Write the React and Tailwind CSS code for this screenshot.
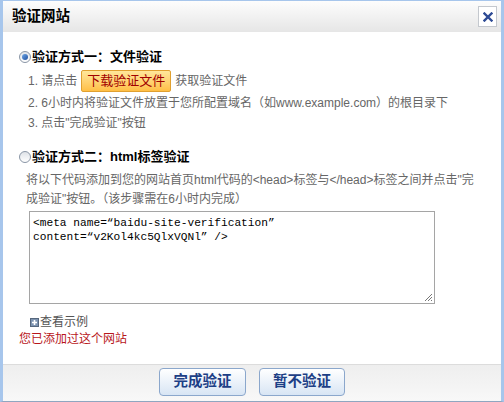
import React from "react";

const cjk = { fontFamily: '"Liberation Sans", "Noto Sans CJK SC", sans-serif' };
const mono = { fontFamily: '"Liberation Mono", "Noto Sans CJK SC", monospace' };

function Radio({ checked }) {
  return (
    <span className="relative inline-flex h-[12px] w-[12px] shrink-0 items-center justify-center rounded-full border border-[#8a96a6] bg-gradient-to-b from-[#dfe3e8] to-[#ffffff]">
      {checked && (
        <span className="h-[6px] w-[6px] rounded-full bg-gradient-to-br from-[#6fa8e8] to-[#1f4f9e]" />
      )}
    </span>
  );
}

export default function App() {
  return (
    <div
      className="flex h-[402px] w-[504px] flex-col border-x-[3px] border-t border-b border-x-[#a7c6ec] border-t-[#a7c6ec] border-b-[#8fa6c0] bg-white"
      style={cjk}
    >
      {/* Header */}
      <div className="flex h-[31px] shrink-0 items-center justify-between bg-gradient-to-b from-[#fdfdfd] to-[#e6e6e6] pl-[9px] pr-[4px]">
        <span className="text-[14.5px] font-bold leading-none text-black">验证网站</span>
        <span className="flex h-[21px] w-[19px] items-center justify-center border border-[#c4c8ce] bg-white">
          <svg width="10" height="10" viewBox="0 0 10 10">
            <path d="M1.5 1.5 L8.5 8.5 M8.5 1.5 L1.5 8.5" stroke="#2d4a94" strokeWidth="2.4" strokeLinecap="square" />
          </svg>
        </span>
      </div>

      {/* Body */}
      <div className="flex flex-1 flex-col pt-[15px]">
        <div className="flex h-[20px] items-center gap-[1px] pl-[16px]">
          <Radio checked />
          <span className="text-[13px] font-bold text-black">验证方式一：文件验证</span>
        </div>
        <div className="mt-[3px] flex h-[22px] items-center pl-[25px] text-[12px] text-[#666]">
          <span>1. 请点击</span>
          <span className="mx-[4px] flex h-[22px] w-[90px] items-center justify-center rounded-[2px] border border-[#e0a030] bg-gradient-to-b from-[#ffe79a] to-[#ffbf45] text-[13px] text-[#a10000]">
            下载验证文件
          </span>
          <span>获取验证文件</span>
        </div>
        <div className="mt-[1px] flex h-[20px] items-center pl-[25px] text-[12px] text-[#666] whitespace-nowrap">
          2. 6小时内将验证文件放置于您所配置域名（如www.example.com）的根目录下
        </div>
        <div className="flex h-[20px] items-center pl-[25px] text-[12px] text-[#666]">
          3. 点击"完成验证"按钮
        </div>

        <div className="mt-[14px] flex h-[20px] items-center gap-[1px] pl-[16px]">
          <Radio />
          <span className="text-[13px] font-bold text-black">验证方式二：html标签验证</span>
        </div>
        <div className="mt-[4px] pl-[23px] text-[12px] leading-[19px] text-[#666] whitespace-nowrap">
          <div>将以下代码添加到您的网站首页html代码的&lt;head&gt;标签与&lt;/head&gt;标签之间并点击"完</div>
          <div>成验证"按钮。（该步骤需在6小时内完成）</div>
        </div>
        <div
          className="relative ml-[26px] mt-[2px] h-[93px] w-[406px] border border-[#a5a5a5] bg-white px-[3px] pt-[4px] text-[11.2px] leading-[14px] text-black"
          style={mono}
        >
          <div className="whitespace-pre">{"<meta name=“baidu-site-verification”"}</div>
          <div className="whitespace-pre">{"content=“v2Kol4kc5QlxVQNl” />"}</div>
          <svg className="absolute bottom-[1px] right-[1px]" width="9" height="9" viewBox="0 0 9 9">
            <path d="M8 1 L1 8 M8 4 L4 8 M8 7 L7 8" stroke="#777" strokeWidth="1" />
          </svg>
        </div>
        <div className="ml-[27px] mt-[10px] flex h-[16px] items-center text-[12px] text-[#555]">
          <span className="mr-[1px] flex h-[9px] w-[9px] items-center justify-center border border-[#56677d] bg-[#7d93b0]">
            <svg width="7" height="7" viewBox="0 0 7 7">
              <path d="M3.5 1 V6 M1 3.5 H6" stroke="#fff" strokeWidth="1.6" />
            </svg>
          </span>
          <span>查看示例</span>
        </div>
        <div className="ml-[16px] flex h-[18px] items-center text-[12px] text-[#b8161c]">
          您已添加过这个网站
        </div>
      </div>

      {/* Footer */}
      <div className="flex h-[37px] shrink-0 items-start justify-center gap-[13px] border-t border-[#dcdcdc] bg-gradient-to-b from-[#eeeeee] to-[#f8f8f8] pt-[3px]">
        <button className="flex h-[28px] w-[87px] items-center justify-center rounded-[4px] border border-[#8ba7cc] bg-gradient-to-b from-[#ffffff] to-[#d8e5f4] text-[14.5px] font-bold text-[#1d3f86]">
          完成验证
        </button>
        <button className="flex h-[28px] w-[86px] items-center justify-center rounded-[4px] border border-[#8ba7cc] bg-gradient-to-b from-[#ffffff] to-[#d8e5f4] text-[14.5px] font-bold text-[#1d3f86]">
          暂不验证
        </button>
      </div>
    </div>
  );
}
